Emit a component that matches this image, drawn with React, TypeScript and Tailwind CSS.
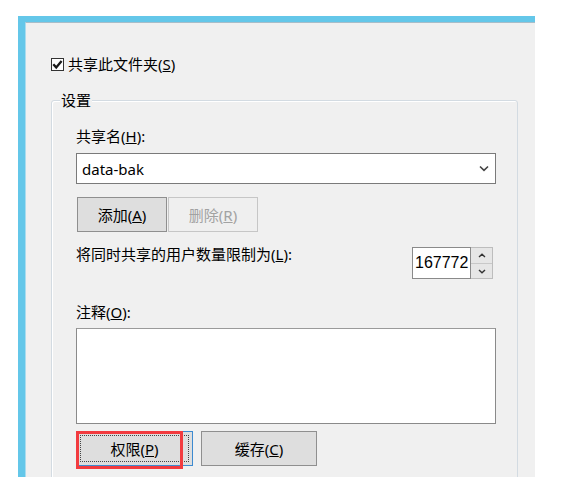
export default function App() {
  return (
    <div className="w-[580px] h-[495px] bg-white pl-[18px] pt-[16px] overflow-hidden font-['Noto_Sans','Noto_Sans_CJK_SC',sans-serif] text-[15px] text-black">
      <div className="w-[517px] h-[461px] border-l-[7px] border-t-[6px] border-[#64c7e9] bg-[#f0f0f0] overflow-hidden">
        <div className="h-full border-l border-t border-l-[#a9dcef] border-t-[#a7bdc9] pl-[25px] pt-[31px] pr-[17px]">
          {/* checkbox row */}
          <div className="flex items-center h-[20px] gap-[4px]">
            <div className="w-[13px] h-[13px] border border-[#333] bg-white flex items-center justify-center">
              <svg width="11" height="11" viewBox="0 0 11 11">
                <path d="M1.3 5.3 L4.2 8.4 L9.6 2" fill="none" stroke="#1a1a1a" strokeWidth="2.3" />
              </svg>
            </div>
            <span className="leading-[20px]">
              共享此文件夹(<u>S</u>)
            </span>
          </div>

          {/* group box */}
          <div className="relative mt-[26px] h-[420px] border border-[#d3dbe2] rounded-[3px] shadow-[inset_1px_1px_0_#ffffff] pl-[24px] pr-[21px] pt-[25px]">
            <span className="absolute left-[8px] top-[-11px] px-[1px] bg-[#f0f0f0] leading-[20px]">设置</span>

            <div className="leading-[20px] h-[20px]">
              共享名(<u>H</u>):
            </div>

            <div className="mt-[7px] h-[31px] border border-[#7a7a7a] bg-white flex items-center justify-between pl-[5px] pr-[6px]">
              <span className="text-[15px] leading-[20px]">data-bak</span>
              <svg width="10" height="7" viewBox="0 0 10 7">
                <path d="M1 1.5 L5 5.3 L9 1.5" fill="none" stroke="#444" strokeWidth="1.6" />
              </svg>
            </div>

            <div className="mt-[13px] flex gap-[1px] ml-[1px]">
              <div className="w-[90px] h-[35px] border border-[#8f8f8f] bg-[#dedede] flex items-center justify-center leading-[20px]">
                添加(<u>A</u>)
              </div>
              <div className="w-[90px] h-[35px] border border-[#c6c6c6] bg-[#efefef] flex items-center justify-center leading-[20px] text-[#a2a2a2]">
                删除(<u>R</u>)
              </div>
            </div>

            <div className="mt-[12px] h-[35px] flex justify-between items-start">
              <div className="leading-[20px]">
                将同时共享的用户数量限制为(<u>L</u>):
              </div>
              <div className="mt-[3px] mr-[3px] flex h-[32px]">
                <div className="w-[59px] h-[32px] border border-[#8a8a8a] bg-white flex items-center pl-[2px] font-['Liberation_Sans',sans-serif] text-[16px]">
                  167772
                </div>
                <div className="w-[22px] h-[32px] flex flex-col border-y border-r border-[#bdbdbd]">
                  <div className="h-[16px] bg-[#e6e6e6] border-b border-[#c8c8c8] flex items-center justify-center">
                    <svg width="8" height="5" viewBox="0 0 8 5">
                      <path d="M1 4 L4 1.2 L7 4" fill="none" stroke="#333" strokeWidth="1.4" />
                    </svg>
                  </div>
                  <div className="flex-1 bg-[#e6e6e6] flex items-center justify-center">
                    <svg width="8" height="5" viewBox="0 0 8 5">
                      <path d="M1 1 L4 3.8 L7 1" fill="none" stroke="#333" strokeWidth="1.4" />
                    </svg>
                  </div>
                </div>
              </div>
            </div>

            <div className="mt-[23px] leading-[20px] h-[20px]">
              注释(<u>O</u>):
            </div>

            <div className="mt-[6px] h-[96px] border border-[#8a8a8a] border-t-[#9a9a9a] bg-white"></div>

            <div className="mt-[7px] flex gap-[8px]">
              <div className="relative w-[117px] h-[35px] border border-[#3d8ad0] bg-[#dedede] p-[3px]">
                <div className="w-full h-full border border-dotted border-[#444] flex items-center justify-center leading-[20px]">
                  权限(<u>P</u>)
                </div>
                <div className="absolute left-[-1px] top-[-1px] w-[107px] h-[38px] border-[3px] border-[#f23b3f]"></div>
              </div>
              <div className="w-[116px] h-[35px] border border-[#8f8f8f] bg-[#dedede] flex items-center justify-center leading-[20px]">
                缓存(<u>C</u>)
              </div>
            </div>
          </div>
        </div>
      </div>
    </div>
  );
}
